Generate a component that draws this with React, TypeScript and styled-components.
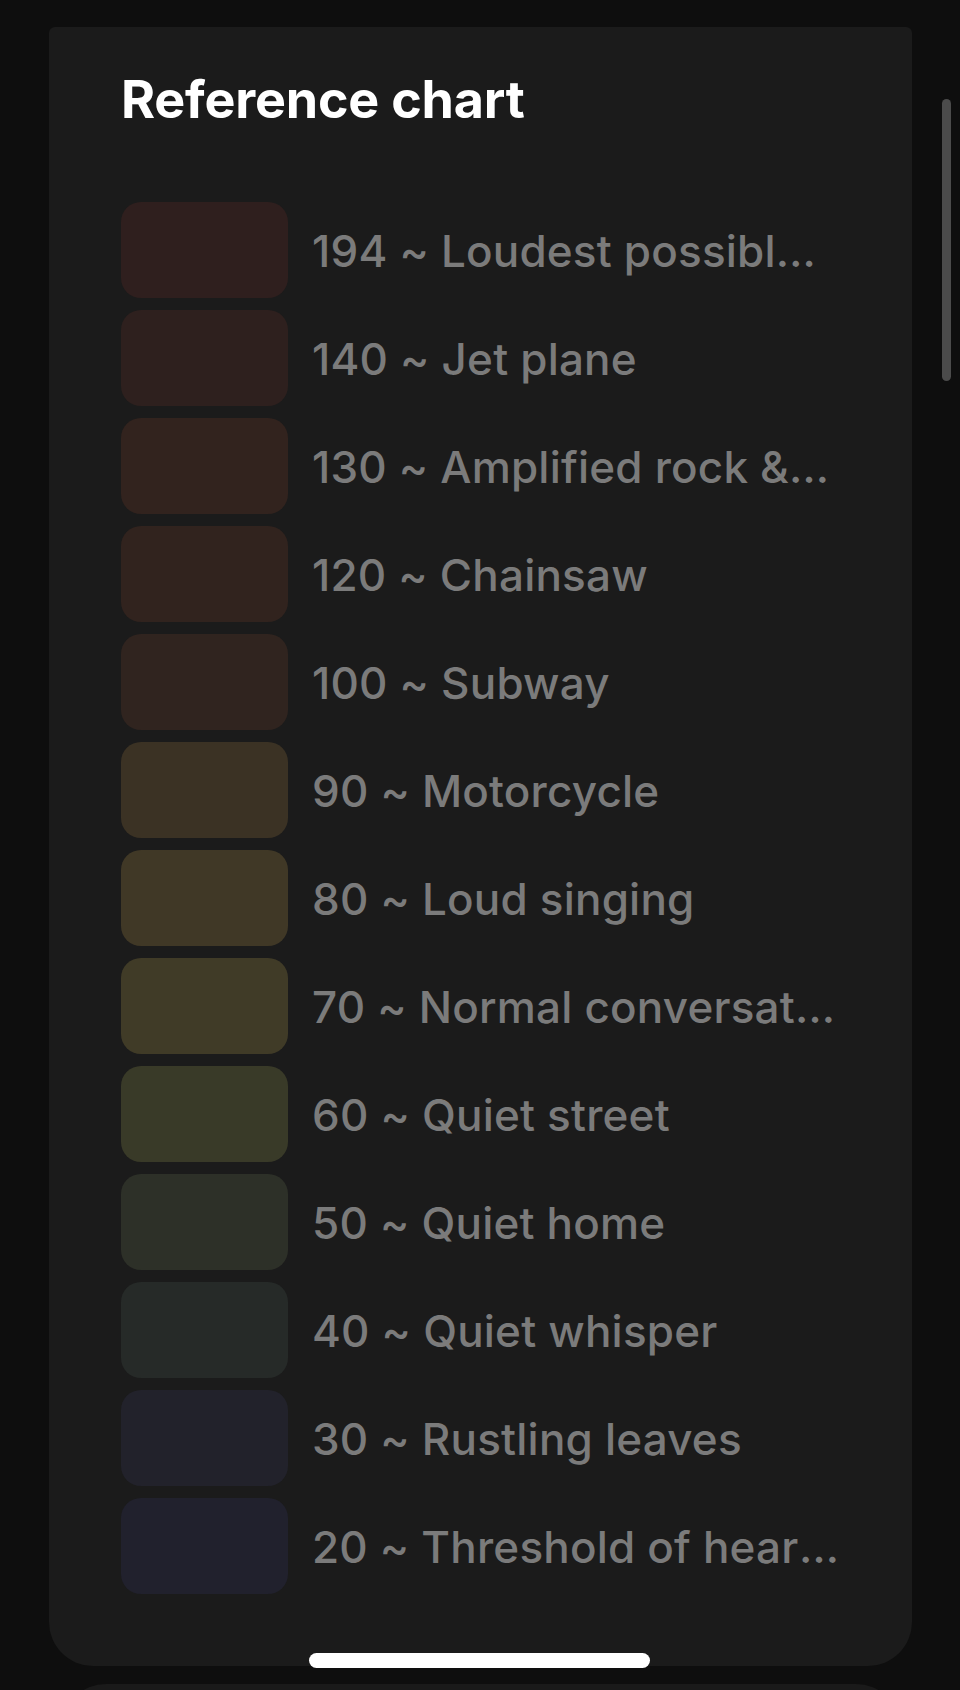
import React from "react";
import styled, { createGlobalStyle } from "styled-components";

const Global = createGlobalStyle`
  html, body {
    margin: 0;
    padding: 0;
    background: #0e0e0e;
  }
  body {
    font-family: Inter, "Noto Sans", "Liberation Sans", sans-serif;
    -webkit-font-smoothing: antialiased;
  }
`;

const Screen = styled.div`
  position: relative;
  width: 960px;
  height: 1690px;
  overflow: hidden;
  background: #0e0e0e;
  padding-top: 27px;
  box-sizing: border-box;
  display: flex;
  flex-direction: column;
  align-items: stretch;
`;

const Sheet = styled.section`
  margin-left: 49px;
  width: 863px;
  height: 1639px;
  box-sizing: border-box;
  background: #1b1b1b;
  border-radius: 6px 6px 44px 44px;
  padding: 43px 72px 0 72px;
  display: flex;
  flex-direction: column;
  flex-shrink: 0;
`;

const NextSheet = styled.div`
  margin: 18px 0 0 62px;
  width: 838px;
  height: 80px;
  flex-shrink: 0;
  background: #1a1a1a;
  border-radius: 44px 44px 0 0;
`;

const Title = styled.h2`
  margin: 0 0 72px 0;
  font-size: 52px;
  line-height: 60px;
  font-weight: 700;
  color: #ffffff;
  letter-spacing: -0.2px;
`;

const List = styled.ul`
  list-style: none;
  margin: 0;
  padding: 0;
  display: flex;
  flex-direction: column;
  gap: 12px;
`;

const Row = styled.li`
  display: flex;
  align-items: center;
  gap: 24px;
  height: 96px;
`;

const Swatch = styled.div<{ $color: string }>`
  flex: 0 0 167px;
  height: 96px;
  border-radius: 20px;
  background: ${(p) => p.$color};
`;

const Label = styled.span`
  flex: 1;
  min-width: 0;
  font-size: 44px;
  font-weight: 500;
  color: #7b7b7b;
  white-space: nowrap;
  overflow: hidden;
  text-overflow: ellipsis;
  letter-spacing: 0.2px;
  line-height: 54px;
  padding-top: 2px;
`;

const ScrollThumb = styled.div`
  position: absolute;
  left: 942px;
  top: 99px;
  width: 9px;
  height: 282px;
  border-radius: 5px;
  background: #4b4b4b;
`;

const HomeIndicator = styled.div`
  position: absolute;
  left: 309px;
  top: 1653px;
  width: 341px;
  height: 15px;
  border-radius: 8px;
  background: #ffffff;
`;

const levels: { db: number; label: string; color: string }[] = [
  { db: 194, label: "Loudest possible sound", color: "#2f1f1e" },
  { db: 140, label: "Jet plane", color: "#2e201e" },
  { db: 130, label: "Amplified rock & roll", color: "#32231e" },
  { db: 120, label: "Chainsaw", color: "#31231e" },
  { db: 100, label: "Subway", color: "#30241f" },
  { db: 90, label: "Motorcycle", color: "#3b3224" },
  { db: 80, label: "Loud singing", color: "#403826" },
  { db: 70, label: "Normal conversation", color: "#403b27" },
  { db: 60, label: "Quiet street", color: "#393a28" },
  { db: 50, label: "Quiet home", color: "#2d3028" },
  { db: 40, label: "Quiet whisper", color: "#262a28" },
  { db: 30, label: "Rustling leaves", color: "#22222b" },
  { db: 20, label: "Threshold of hearing", color: "#21212d" },
];

export default function App() {
  return (
    <>
      <Global />
      <Screen>
        <Sheet>
          <Title>Reference chart</Title>
          <List>
            {levels.map((l) => (
              <Row key={l.db}>
                <Swatch $color={l.color} />
                <Label>
                  {l.db} ~ {l.label}
                </Label>
              </Row>
            ))}
          </List>
        </Sheet>
        <NextSheet />
        <ScrollThumb />
        <HomeIndicator />
      </Screen>
    </>
  );
}
